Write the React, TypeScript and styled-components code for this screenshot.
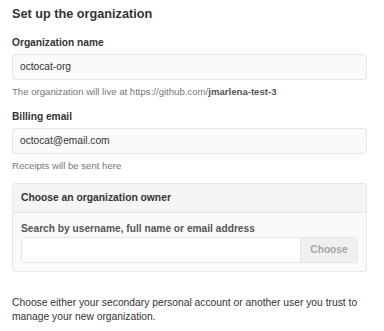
import React from "react";
import styled, { createGlobalStyle } from "styled-components";

const Global = createGlobalStyle`
  html, body { margin: 0; padding: 0; background: #fff; }
  body { font-family: "Liberation Sans", Arial, Helvetica, sans-serif; color: #333; }
  * { box-sizing: border-box; }
`;

const Page = styled.div`
  width: 384px;
  padding: 6px 17px 0 12px;
`;

const Title = styled.h2`
  margin: 0 0 13px;
  font-size: 12.7px;
  line-height: 17px;
  font-weight: bold;
  color: #333;
`;

const Field = styled.div<{ $gap?: number }>`
  display: flex;
  flex-direction: column;
  margin-bottom: ${(p) => p.$gap ?? 0}px;
`;

const Label = styled.label`
  font-size: 10.2px;
  line-height: 13px;
  font-weight: bold;
  color: #333;
  margin-bottom: 5px;
`;

const Input = styled.div`
  height: 26px;
  border: 1px solid #e6e6e6;
  border-radius: 3px;
  background: #fafafa;
  font-size: 10.2px;
  line-height: 24px;
  padding: 0 7px;
  color: #333;
`;

const Help = styled.p`
  margin: 6px 0 0;
  font-size: 9.6px;
  line-height: 12px;
  color: #767676;
  b { color: #555; }
`;

const Box = styled.div`
  border: 1px solid #e8e8e8;
  border-radius: 3px;
  background: #fafafa;
`;

const BoxHeader = styled.div`
  height: 29px;
  background: #f5f5f5;
  border-bottom: 1px solid #e5e5e5;
  padding: 0 8px;
  font-size: 10.3px;
  font-weight: bold;
  line-height: 28px;
  color: #333;
`;

const BoxBody = styled.div`
  padding: 9px 8px 8px;
  display: flex;
  flex-direction: column;
`;

const SearchLabel = styled.label`
  font-size: 10.2px;
  line-height: 13px;
  font-weight: bold;
  color: #555;
  margin-bottom: 2px;
`;

const SearchRow = styled.div`
  display: flex;
  height: 26px;
  border: 1px solid #e6e6e6;
  border-radius: 3px;
  overflow: hidden;
  background: #fff;
`;

const SearchInput = styled.div`
  flex: 1;
  background: #fff;
`;

const ChooseButton = styled.div`
  width: 57px;
  background: #efefef;
  border-left: 1px solid #e3e3e3;
  color: #a6a6a6;
  font-size: 10.2px;
  font-weight: bold;
  line-height: 24px;
  text-align: center;
`;

const Para = styled.p`
  margin: 24px 0 0;
  font-size: 10.3px;
  line-height: 14px;
  color: #333;
`;

export default function App() {
  return (
    <Page>
      <Global />
      <Title>Set up the organization</Title>
      <Field $gap={12}>
        <Label>Organization name</Label>
        <Input>octocat-org</Input>
        <Help>
          The organization will live at https://github.com/<b>jmarlena-test-3</b>
        </Help>
      </Field>
      <Field $gap={11}>
        <Label>Billing email</Label>
        <Input>octocat@email.com</Input>
        <Help>Receipts will be sent here</Help>
      </Field>
      <Box>
        <BoxHeader>Choose an organization owner</BoxHeader>
        <BoxBody>
          <SearchLabel>Search by username, full name or email address</SearchLabel>
          <SearchRow>
            <SearchInput />
            <ChooseButton>Choose</ChooseButton>
          </SearchRow>
        </BoxBody>
      </Box>
      <Para>
        Choose either your secondary personal account or another user you trust to manage your new
        organization.
      </Para>
    </Page>
  );
}
